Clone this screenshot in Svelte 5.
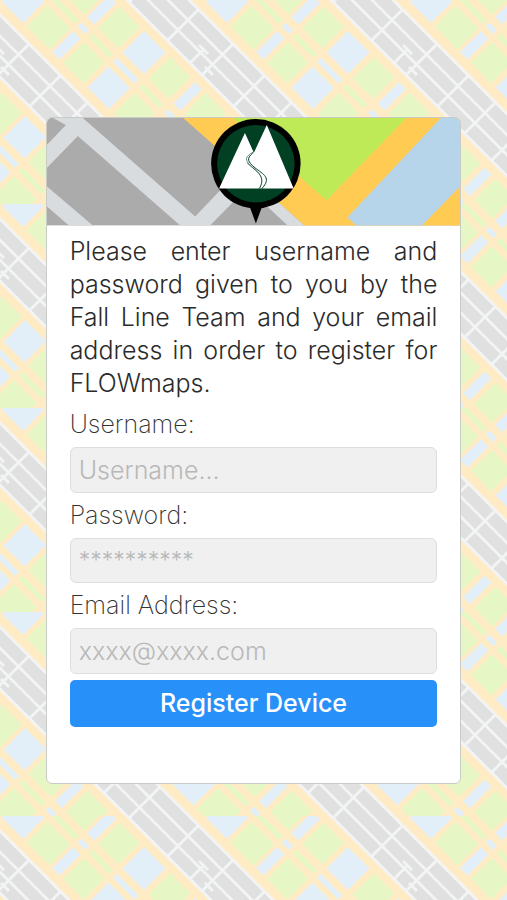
<script lang="ts">
  type Block = { u: number; v: number; w: number; h: number; kind: string };

  // city blocks of one map tile, on axes turned by 45 degrees
  const rows = [
    { v: 4, h: 42, sides: "water", middle: "park" },
    { v: 53, h: 46, sides: "park", middle: "park" },
    { v: 104, h: 15, sides: "water", middle: "water" },
    { v: 126, h: 41, sides: "park", middle: "park" },
    { v: 175, h: 43, sides: "water", middle: "water" },
    { v: 227, h: 41, sides: "park", middle: "park" },
    { v: 277, h: 14, sides: "water", middle: "water" },
    { v: 298, h: 41, sides: "park", middle: "park" },
    { v: 345, h: 42, sides: "water", middle: "water" },
    { v: 394, h: 46, sides: "park", middle: "park" },
    { v: 448, h: 14, sides: "water", middle: "water" },
    { v: 470, h: 41, sides: "park", middle: "park" },
  ];
  const blocks: Block[] = rows.flatMap((row) => [
    { u: 0, v: row.v, w: 42, h: row.h, kind: row.sides },
    { u: 51, v: row.v, w: 8, h: row.h, kind: row.middle },
    { u: 70, v: row.v, w: 43, h: row.h, kind: row.v < 60 ? "park" : row.sides },
  ]);
  const streets = [131, 208, 277, 340, 394, 448, 489, 539];

  let username = "";
  let password = "";
  let email = "";
</script>

<svg class="map" aria-hidden="true">
  <defs>
    <pattern id="tile" width="204" height="204" patternUnits="userSpaceOnUse">
      <rect class="road" width="204" height="204" />
      {#each [0, -204] as shift}
        <g transform="translate({shift} 0) matrix(.5 -.5 .5 .5 0 0)">
          {#each blocks as block}
            <rect
              class={block.kind}
              x={block.u}
              y={block.v}
              width={block.w}
              height={block.h}
            />
          {/each}
          <rect class="town" x="127" y="0" width="62" height="700" />
          <path
            class="street"
            d="M127 0V700M148 0V700M168 0V700M189 0V700M127 253H155M138 272V288M154 244V262"
          />
          {#each streets as v}
            <path class="street" d="M127 {v}H189" />
          {/each}
        </g>
      {/each}
    </pattern>
  </defs>
  <rect width="100%" height="100%" fill="url(#tile)" />
</svg>

<main>
  <form class="card" on:submit|preventDefault>
    <svg class="banner" viewBox="0 0 416 108" role="img" aria-label="Fall Line">
      <rect width="416" height="108" fill="#ababab" />
      <g fill="#d9dcdf">
        <path d="M6 0H36L149 99L190 56L206 65L164 108H134L31 18L0 50V27L19 7Z" />
        <path d="M0 69L46 108H22L0 89Z" />
        <path d="M190 60L205 60L259 108H242Z" />
      </g>
      <path d="M137 0H416V108H259Z" fill="#ffcb53" />
      <path d="M187 0H361L281 83Z" fill="#bdea56" />
      <path d="M396 0H416V68L377 108H311L302 100Z" fill="#b6d4ea" />
      <path d="M203 87H217L210 106Z" />
      <circle cx="210" cy="46" r="45" />
      <circle cx="210" cy="46" r="39" fill="#024023" />
      <path d="M173 71L199 15L208 35L221 7L248 71Z" fill="#fff" />
      <g fill="none" stroke="#024023">
        <path
          d="M208 34C198 39 199 43 206 49C213 55 219 59 214 71"
          stroke-width="0.6"
        />
        <path
          d="M207 35C200 41 202 44 209 50C218 57 226 60 216 71"
          stroke-width="1"
        />
        <path d="M201 45C206 51 223 58 213 71" stroke-width="0.6" />
      </g>
    </svg>

    <div class="fields">
      <p>
        Please enter username and password given to you by the Fall Line Team
        and your email address in order to register for FLOWmaps.
      </p>
      <label for="username">Username:</label>
      <input
        id="username"
        type="text"
        placeholder="Username..."
        bind:value={username}
      />
      <label for="password">Password:</label>
      <input
        id="password"
        class="password"
        type="password"
        placeholder="**********"
        bind:value={password}
      />
      <label for="email">Email Address:</label>
      <input
        id="email"
        type="email"
        placeholder="xxxx@xxxx.com"
        bind:value={email}
      />
      <button type="submit">Register Device</button>
    </div>
  </form>
</main>

<style>
  :global(body) {
    margin: 0;
    background-color: #ffebc4;
  }

  .map {
    position: fixed;
    inset: 0;
    z-index: -1;
    width: 100%;
    height: 100%;
  }
  .road {
    fill: #ffebc4;
  }
  .park {
    fill: #e6f6c4;
  }
  .water {
    fill: #e3eff8;
  }
  .town {
    fill: #e0e0e0;
  }
  .street {
    fill: none;
    stroke: #f3f4f5;
    stroke-width: 4;
  }

  main {
    box-sizing: border-box;
    min-height: 100vh;
    display: flex;
    flex-direction: column;
    justify-content: center;
    padding: 1px 9% 0;
    font-family: Inter, "Liberation Sans", sans-serif;
  }

  .card {
    overflow: hidden;
    border: 1px solid #c8cbc8;
    border-radius: 6px;
    background-color: #fff;
  }

  .banner {
    display: block;
    width: 100%;
  }

  .fields {
    display: flex;
    flex-direction: column;
    padding: 9px 23px 56px;
  }

  p {
    margin: 0 0 8px;
    color: #2b2b2b;
    font-size: 25px;
    font-weight: 300;
    line-height: 33px;
    text-align: justify;
  }

  label {
    margin-bottom: 7px;
    color: #333;
    font-size: 25px;
    font-weight: 200;
    line-height: 32px;
  }

  input {
    box-sizing: border-box;
    width: 100%;
    height: 46px;
    margin: 0 0 6px;
    padding: 0 8px;
    border: 1px solid #dedede;
    border-radius: 6px;
    background-color: #f0f0f0;
    color: #333;
    font-family: inherit;
    font-size: 25px;
    font-weight: 300;
  }
  input::placeholder {
    color: #b8b8b8;
    opacity: 1;
  }

  .password {
    height: 45px;
    font-size: 23px;
  }

  button {
    height: 47px;
    padding: 0;
    border: none;
    border-radius: 5px;
    background-color: #2791f9;
    color: #fff;
    font-family: inherit;
    font-size: 25px;
    font-weight: 500;
  }
</style>
